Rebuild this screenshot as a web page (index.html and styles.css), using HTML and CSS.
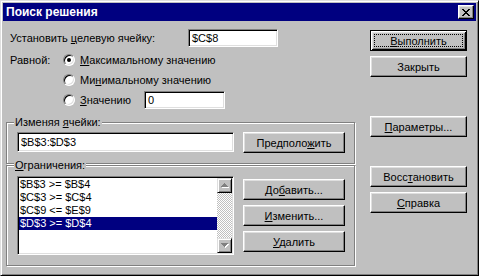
FILE: index.html
```html
<!DOCTYPE html>
<html lang="ru">
<head>
    <meta charset="UTF-8">
    <title>Поиск решения</title>
    <link rel="stylesheet" href="styles.css">
</head>
<body>
    <div class="window">
        <div class="titlebar">
            <span class="title">Поиск решения</span>
            <span class="close-btn">
                <svg width="8" height="7" viewBox="0 0 8 7" shape-rendering="crispEdges">
                    <path d="M0 0h2v1H0zM6 0h2v1H6zM1 1h2v1H1zM5 1h2v1H5zM2 2h4v1H2zM3 3h2v1H3zM2 4h4v1H2zM1 5h2v1H1zM5 5h2v1H5zM0 6h2v1H0zM6 6h2v1H6z" fill="#000"/>
                </svg>
            </span>
        </div>

        <div class="dialog">
            <div class="main">
                <div class="target-row">
                    <span class="target-label">Установить <u>ц</u>елевую ячейку:</span>
                    <div class="field target-field">$C$8</div>
                </div>

                <div class="equal-block">
                    <div class="equal-label">Равной:</div>
                    <div class="options">
                        <div class="option"><span class="radio checked"></span><span><u>М</u>аксимальному значению</span></div>
                        <div class="option"><span class="radio"></span><span>Ми<u>н</u>имальному значению</span></div>
                        <div class="option"><span class="radio"></span><span class="value-label"><u>З</u>начению</span><div class="field value-field">0</div></div>
                    </div>
                </div>

                <div class="group changing">
                    <div class="group-title">Изменяя <u>я</u>чейки:</div>
                    <div class="group-row">
                        <div class="field wide-field">$B$3:$D$3</div>
                        <button class="btn side-btn">Предполо<u>ж</u>ить</button>
                    </div>
                </div>

                <div class="group constraints">
                    <div class="group-title"><u>О</u>граничения:</div>
                    <div class="group-row">
                        <div class="listbox">
                            <div class="items">
                                <div class="item">$B$3 &gt;= $B$4</div>
                                <div class="item">$C$3 &gt;= $C$4</div>
                                <div class="item">$C$9 &lt;= $E$9</div>
                                <div class="item selected">$D$3 &gt;= $D$4</div>
                            </div>
                            <div class="scrollbar">
                                <div class="scroll-btn">
                                    <svg width="8" height="5" viewBox="0 0 8 5" shape-rendering="crispEdges">
                                        <path d="M4 1h1v1h1v1h1v1h1v1H1V4h1V3h1V2h1z" fill="#fff"/>
                                        <path d="M3 0h1v1h1v1h1v1h1v1H0V3h1V2h1V1h1z" fill="#808080"/>
                                    </svg>
                                </div>
                                <div class="scroll-track"></div>
                                <div class="scroll-btn">
                                    <svg width="8" height="5" viewBox="0 0 8 5" shape-rendering="crispEdges">
                                        <path d="M1 1h7v1H7v1H6v1H5v1H4V4H3V3H2V2H1z" fill="#fff"/>
                                        <path d="M0 0h7v1H6v1H5v1H4v1H3V3H2V2H1V1H0z" fill="#808080"/>
                                    </svg>
                                </div>
                            </div>
                        </div>
                        <div class="list-buttons">
                            <button class="btn side-btn">До<u>б</u>авить...</button>
                            <button class="btn side-btn"><u>И</u>зменить...</button>
                            <button class="btn side-btn"><u>У</u>далить</button>
                        </div>
                    </div>
                </div>
            </div>

            <div class="actions">
                <button class="btn default"><u>В</u>ыполнить</button>
                <button class="btn close">Закрыть</button>
                <button class="btn params"><u>П</u>араметры...</button>
                <button class="btn restore">Восс<u>т</u>ановить</button>
                <button class="btn help"><u>С</u>правка</button>
            </div>
        </div>
    </div>
</body>
</html>
```

FILE: styles.css
```css
* {
    box-sizing: border-box;
}
body {
    margin: 0;
    background: #c0c0c0;
    font-family: "Liberation Sans", Arial, sans-serif;
    font-size: 11px;
    color: #000;
}
.window {
    width: 479px;
    height: 276px;
    border: 1px solid;
    border-color: #dfdfdf #000 #000 #dfdfdf;
    box-shadow: inset 1px 1px #fff, inset -1px -1px #808080;
    padding: 2px;
    background: #c0c0c0;
}
.titlebar {
    height: 18px;
    background: #000080;
    color: #fff;
    font-size: 12px;
    font-weight: bold;
    display: flex;
    align-items: center;
    justify-content: space-between;
    padding: 0 2px 0 3px;
}
.close-btn {
    width: 16px;
    height: 14px;
    background: #c0c0c0;
    border: 1px solid;
    border-color: #fff #000 #000 #fff;
    box-shadow: inset -1px -1px #808080, inset 1px 1px #dfdfdf;
    display: flex;
    align-items: center;
    justify-content: center;
}
.close-btn svg {
    display: block;
}
.dialog {
    display: flex;
    gap: 14px;
    padding: 8px 0 0 3px;
}
.main {
    width: 350px;
}

/* sunken text fields */
.field {
    background: #fff;
    border: 1px solid;
    border-color: #808080 #fff #fff #808080;
    box-shadow: inset 1px 1px #000, inset -1px -1px #dfdfdf;
    padding: 0 3px;
    display: flex;
    align-items: center;
}
.target-row {
    display: flex;
    align-items: center;
    padding-left: 4px;
}
.target-label {
    width: 178px;
}
.target-field {
    width: 90px;
    height: 18px;
}
.equal-block {
    display: flex;
    margin-top: 3px;
    padding-left: 4px;
}
.equal-label {
    width: 53px;
    height: 20px;
    line-height: 20px;
}
.option {
    display: flex;
    align-items: center;
    height: 20px;
}
.radio {
    flex: none;
    position: relative;
    width: 12px;
    height: 12px;
    margin-right: 5px;
    border-radius: 50%;
    background: #fff;
    border: 1px solid;
    border-color: #808080 #fff #fff #808080;
    box-shadow: inset 1px 1px #000, inset -1px -1px #dfdfdf;
}
.radio.checked::after {
    content: "";
    position: absolute;
    left: 3px;
    top: 3px;
    width: 4px;
    height: 4px;
    border-radius: 50%;
    background: #000;
}
.value-label {
    width: 64px;
}
.value-field {
    width: 81px;
    height: 18px;
}

/* etched group boxes */
.group {
    width: 349px;
    border: 1px solid #808080;
    box-shadow: inset 1px 1px #fff, 1px 1px #fff;
    display: flex;
    flex-direction: column;
}
.group-title {
    align-self: flex-start;
    margin: -7px 0 -6px 7px;
    padding: 0 1px;
    line-height: 13px;
    background: #c0c0c0;
}
.group-row {
    display: flex;
    gap: 9px;
    margin-left: 10px;
}
.changing {
    margin-top: 12px;
    height: 42px;
}
.changing .group-row {
    margin-top: 9px;
}
.constraints {
    margin-top: 1px;
    height: 101px;
}
.constraints .group-row {
    margin-top: 10px;
}
.wide-field {
    width: 217px;
    height: 20px;
}

/* list with constraints */
.listbox {
    width: 217px;
    height: 79px;
    display: flex;
    padding: 1px;
    background: #fff;
    border: 1px solid;
    border-color: #808080 #fff #fff #808080;
    box-shadow: inset 1px 1px #000, inset -1px -1px #dfdfdf;
}
.items {
    flex: 1;
}
.item {
    height: 13px;
    line-height: 13px;
    padding-left: 1px;
}
.item.selected {
    background: #000080;
    color: #fff;
}
.scrollbar {
    width: 15px;
    display: flex;
    flex-direction: column;
}
.scroll-btn {
    height: 15px;
    background: #c0c0c0;
    border: 1px solid;
    border-color: #dfdfdf #000 #000 #dfdfdf;
    box-shadow: inset 1px 1px #fff, inset -1px -1px #808080;
    display: flex;
    align-items: center;
    justify-content: center;
}
.scroll-btn svg {
    display: block;
}
.scroll-track {
    flex: 1;
    background-image: repeating-conic-gradient(#fff 0 25%, #c0c0c0 0 50%);
    background-size: 2px 2px;
}
.list-buttons {
    display: flex;
    flex-direction: column;
    gap: 5px;
    padding-top: 3px;
}

/* raised push buttons */
.btn {
    font: inherit;
    color: #000;
    background: #c0c0c0;
    height: 21px;
    padding: 0;
    border: 1px solid;
    border-color: #fff #000 #000 #fff;
    box-shadow: inset -1px -1px #808080, inset 1px 1px #dfdfdf;
    text-align: center;
}
.side-btn {
    width: 102px;
}
.btn.default {
    border-color: #000;
    box-shadow: inset 1px 1px #fff, inset -1px -1px #000, inset 2px 2px #dfdfdf, inset -2px -2px #808080;
    outline: 1px dotted #000;
    outline-offset: -5px;
}
.actions {
    width: 97px;
    display: flex;
    flex-direction: column;
    padding-top: 1px;
}
.actions .btn {
    width: 97px;
}
.close {
    margin-top: 5px;
}
.params {
    margin-top: 39px;
}
.restore {
    margin-top: 29px;
}
.help {
    margin-top: 5px;
}
```
